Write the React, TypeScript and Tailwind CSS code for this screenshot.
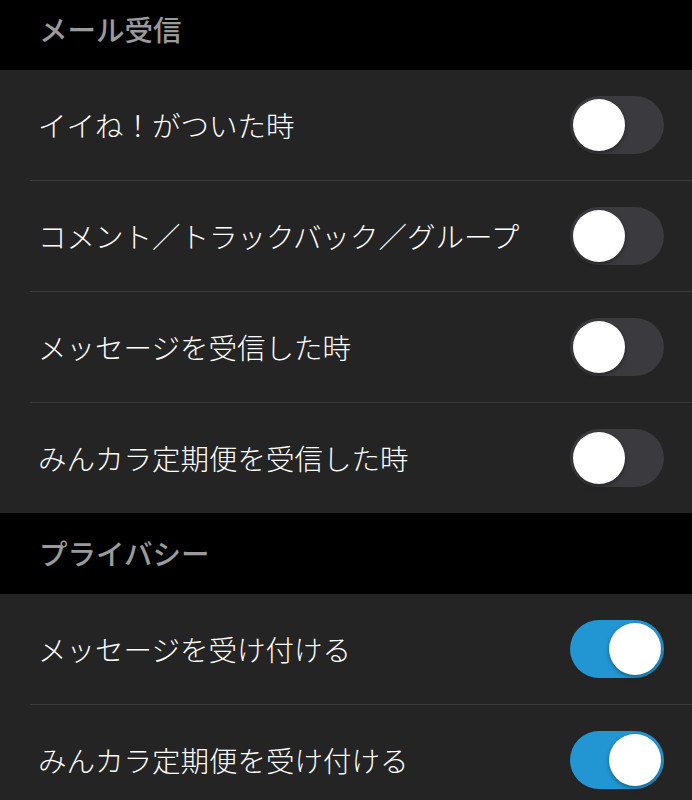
import React from "react";

const Toggle = ({ on }: { on: boolean }) => (
  <div
    className={
      "relative w-[94px] h-[58px] rounded-full shrink-0 " +
      (on ? "bg-[#2196d3]" : "bg-[#3a3a3f]")
    }
  >
    <div
      className={
        "absolute top-[3px] w-[52px] h-[52px] rounded-full bg-white shadow-[0_2px_4px_rgba(0,0,0,0.35)] " +
        (on ? "right-[3px]" : "left-[3px]")
      }
    />
  </div>
);

const Row = ({ label, on, last }: { label: string; on: boolean; last?: boolean }) => (
  <div className="pl-[30px] bg-[#242424]">
    <div
      className={
        "flex items-center justify-between pl-[8px] pr-[28px] " +
        (last ? "h-[110px]" : "h-[111px] border-b border-[#3b3b3b]")
      }
    >
      <span className="text-[28.5px] text-white font-light leading-none">{label}</span>
      <Toggle on={on} />
    </div>
  </div>
);

const Header = ({ label, h }: { label: string; h: string }) => (
  <div className={"bg-black flex items-end pl-[39px] pb-[27px] " + h}>
    <span className="text-[28.5px] font-medium text-[#9a9a9a] leading-none">{label}</span>
  </div>
);

export default function App() {
  return (
    <div
      className="w-[692px] h-[800px] overflow-hidden bg-[#242424]"
      style={{ fontFamily: '"Noto Sans CJK JP", "Noto Sans", sans-serif' }}
    >
      <Header label="メール受信" h="h-[70px]" />
      <Row label="イイね！がついた時" on={false} />
      <Row label="コメント／トラックバック／グループ" on={false} />
      <Row label="メッセージを受信した時" on={false} />
      <Row label="みんカラ定期便を受信した時" on={false} last />
      <Header label="プライバシー" h="h-[81px]" />
      <Row label="メッセージを受け付ける" on={true} />
      <Row label="みんカラ定期便を受け付ける" on={true} />
    </div>
  );
}
